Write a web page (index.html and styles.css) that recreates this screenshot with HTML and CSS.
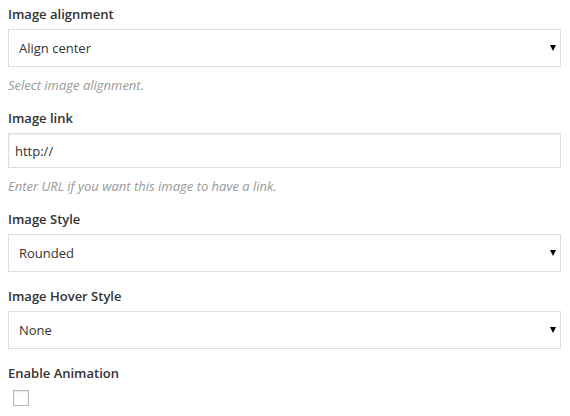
FILE: index.html
```html
<!DOCTYPE html>
<html>
<head>
<meta charset="utf-8">
<link rel="stylesheet" href="styles.css">
</head>
<body>
<div class="form">
  <div class="field">
    <div class="label">Image alignment</div>
    <div class="select"><span>Align center</span><span class="arrow"></span></div>
    <div class="desc">Select image alignment.</div>
  </div>
  <div class="field">
    <div class="label">Image link</div>
    <div class="input">http://</div>
    <div class="desc">Enter URL if you want this image to have a link.</div>
  </div>
  <div class="field">
    <div class="label">Image Style</div>
    <div class="select"><span>Rounded</span><span class="arrow"></span></div>
  </div>
  <div class="field">
    <div class="label">Image Hover Style</div>
    <div class="select"><span>None</span><span class="arrow"></span></div>
  </div>
  <div class="field">
    <div class="label">Enable Animation</div>
    <div class="checkbox"></div>
  </div>
</div>
</body>
</html>
```

FILE: styles.css
```css
html, body {
  margin: 0;
  padding: 0;
  background: #fff;
}
body {
  font-family: "Open Sans", "Liberation Sans", sans-serif;
  font-size: 13px;
  color: #333;
}
.form {
  padding: 4px 9px 0 8px;
  display: flex;
  flex-direction: column;
}
.field {
  display: flex;
  flex-direction: column;
  margin-bottom: 14px;
}
.label {
  font-weight: 600;
  line-height: 20px;
  margin-bottom: 5px;
  color: #333;
}
.select {
  height: 38px;
  box-sizing: border-box;
  border: 1px solid #ddd;
  display: flex;
  align-items: center;
  justify-content: space-between;
  padding: 0 4px 0 10px;
  color: #333;
}
.arrow {
  width: 0;
  height: 0;
  border-left: 3.5px solid transparent;
  border-right: 3.5px solid transparent;
  border-top: 6px solid #000;
}
.input {
  height: 35px;
  box-sizing: border-box;
  border: 1px solid #ddd;
  box-shadow: inset 0 1px 2px rgba(0,0,0,.07);
  display: flex;
  align-items: center;
  padding: 0 6px;
  color: #333;
}
.desc {
  font-style: italic;
  font-size: 13px;
  color: #999;
  margin-top: 9px;
  line-height: 18px;
}
.checkbox {
  width: 16px;
  height: 16px;
  box-sizing: border-box;
  border: 1px solid #b4b9be;
  box-shadow: inset 0 1px 2px rgba(0,0,0,.1);
  margin-left: 5px;
  margin-top: 2px;
  background: #fff;
}
```
